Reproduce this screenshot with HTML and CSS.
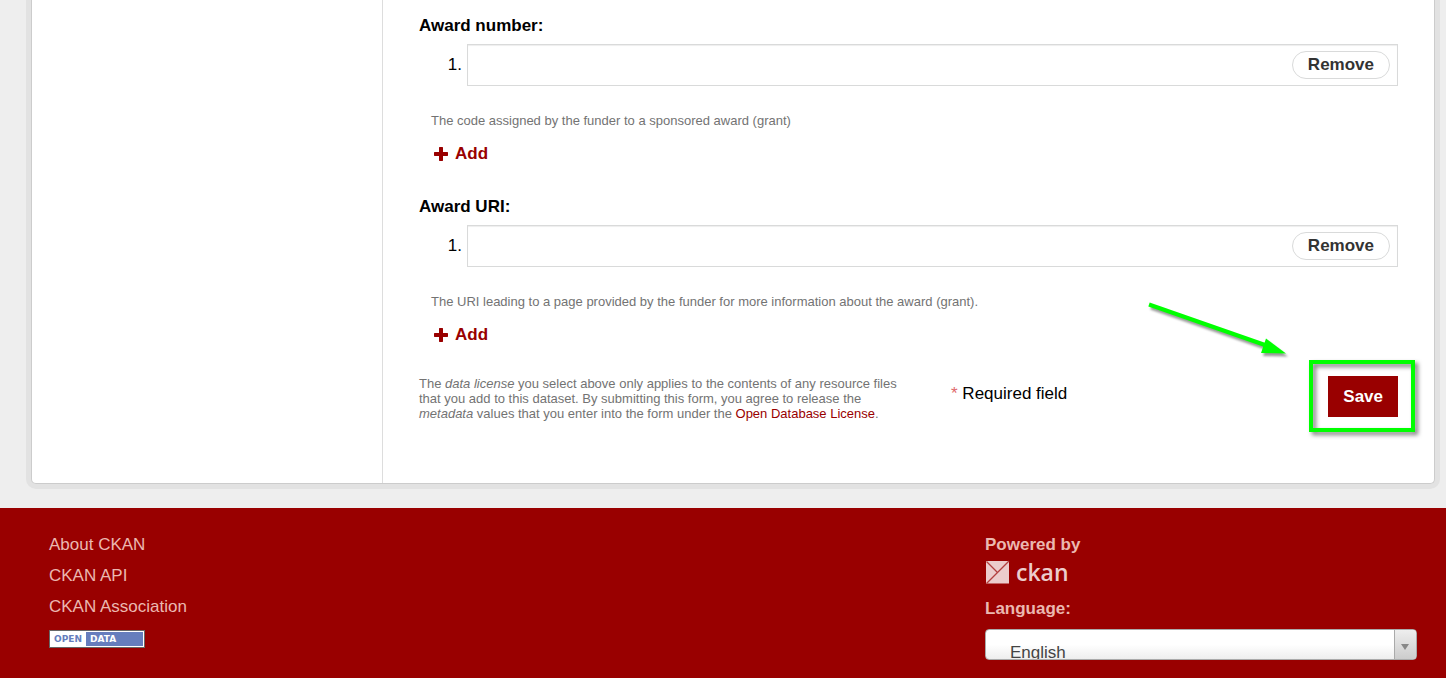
FILE: index.html
```html
<!DOCTYPE html>
<html lang="en">
<head>
<meta charset="utf-8">
<meta name="viewport" content="width=device-width, initial-scale=1">
<title>Edit dataset - CKAN</title>
<link rel="stylesheet" href="styles.css">
</head>
<body>
<main class="wrapper">
  <aside class="sidebar"></aside>
  <form class="content">
    <section class="field">
      <label class="field-label" for="award-number">Award number:</label>
      <ol class="values">
        <li class="value">
          <div class="value-box">
            <input class="value-input" id="award-number" type="text">
            <button class="remove" type="button">Remove</button>
          </div>
        </li>
      </ol>
      <p class="help">The code assigned by the funder to a sponsored award (grant)</p>
      <a class="add" href="#add-number"><svg class="plus" viewBox="0 0 14 14" aria-hidden="true"><path d="M5.500 0h3l.5.5V5h4.500l.5.5v3l-.5.5H9v4.500l-.5.5h-3l-.5-.5V9H.5L0 8.500v-3L.5 5H5V.5z"/></svg>Add</a>
    </section>
    <section class="field">
      <label class="field-label" for="award-uri">Award URI:</label>
      <ol class="values">
        <li class="value">
          <div class="value-box">
            <input class="value-input" id="award-uri" type="text">
            <button class="remove" type="button">Remove</button>
          </div>
        </li>
      </ol>
      <p class="help">The URI leading to a page provided by the funder for more information about the award (grant).</p>
      <a class="add" href="#add-uri"><svg class="plus" viewBox="0 0 14 14" aria-hidden="true"><path d="M5.500 0h3l.5.5V5h4.500l.5.5v3l-.5.5H9v4.500l-.5.5h-3l-.5-.5V9H.5L0 8.500v-3L.5 5H5V.5z"/></svg>Add</a>
    </section>
    <div class="actions">
      <p class="license">The <em>data license</em> you select above only applies to the contents of any resource files that you add to this dataset. By submitting this form, you agree to release the <em>metadata</em> values that you enter into the form under the <a class="license-link" href="#odbl">Open Database License</a>.</p>
      <p class="required"><span class="star">*</span> Required field</p>
      <div class="save-area">
        <button class="save" type="submit">Save</button>
        <span class="highlight"></span>
        <svg class="arrow" viewBox="0 0 144 60" aria-hidden="true">
          <path d="M4 4.500 120 45" stroke="#0f0" stroke-width="4" fill="none"/>
          <path d="M121 38.500 141 53.500 116 53z" fill="#0f0"/>
        </svg>
      </div>
    </div>
  </form>
</main>
<footer class="footer">
  <nav class="footer-links">
    <a class="footer-link" href="#about">About CKAN</a>
    <a class="footer-link" href="#api">CKAN API</a>
    <a class="footer-link" href="#association">CKAN Association</a>
    <a class="badge" href="#open-data"><span class="badge-open">OPEN</span><span class="badge-data">DATA</span></a>
  </nav>
  <div class="footer-side">
    <strong class="footer-heading">Powered by</strong>
    <a class="logo" href="#ckan">
      <svg class="logo-mark" viewBox="0 0 24 24" aria-hidden="true">
        <path d="M0.500 1h23v22.500h-23z" fill="#eccccc"/>
        <path d="M1 1.500 11.500 12M23.500 1 1 23.500" stroke="#b23f3f" stroke-width="1.300" fill="none"/>
      </svg>
      <span class="logo-text">ckan</span>
    </a>
    <label class="footer-heading language" for="language">Language:</label>
    <div class="select-box">
      <select class="select" id="language"><option>English</option></select>
      <span class="select-arrow"></span>
    </div>
  </div>
</footer>
</body>
</html>
```
FILE: styles.css
```css
* {
  box-sizing: border-box;
}

body {
  margin: 0;
  min-height: 100vh;
  display: flex;
  flex-direction: column;
  background: #eee;
  color: #000;
  font: 17px/20px "Liberation Sans", Arial, sans-serif;
}

a {
  text-decoration: none;
}

.wrapper {
  display: flex;
  margin: 0 11px 24px 31px;
  background: #fff;
  border: 1px solid #ccc;
  border-top: 0;
  border-radius: 0 0 5px 5px;
  box-shadow: 0 0 0 5px #e2e2e2;
}

.sidebar {
  flex: 0 0 350px;
}

.content {
  flex: 1;
  min-width: 0;
  padding: 16px 36px 62px;
  border-left: 1px solid #ddd;
}

.field {
  margin-bottom: 31px;
}

.field + .field {
  margin-top: 33px;
}

.field-label {
  display: block;
  font-weight: bold;
}

.values {
  margin: 8px 0 25px;
  padding: 0;
  list-style: none;
  counter-reset: value;
}

.value {
  display: flex;
  align-items: center;
  counter-increment: value;
}

.value::before {
  content: counter(value) ".";
  flex: 0 0 43px;
  padding-right: 5px;
  text-align: right;
}

.value-box {
  flex: 1;
  display: flex;
  align-items: center;
  height: 42px;
  padding-right: 7px;
  border: 1px solid #d9dada;
  box-shadow: inset 0 1px 1px #eee;
}

.value-input {
  flex: 1;
  min-width: 0;
  height: 36px;
  padding: 0 8px;
  border: 0;
  outline: 0;
  background: transparent;
  font: inherit;
}

.remove {
  height: 28px;
  padding: 0 15px;
  border: 1px solid #d9dada;
  border-radius: 14px;
  background: #fff;
  color: #333;
  font: bold 17px/20px "Liberation Sans", Arial, sans-serif;
}

.help {
  margin: 0 0 13px 12px;
  color: #737373;
  font-size: 13px;
}

.add {
  display: flex;
  align-items: center;
  gap: 7px;
  width: max-content;
  margin-left: 15px;
  color: #900;
  font-weight: bold;
}

.plus {
  width: 14px;
  height: 14px;
  fill: #900;
}

.actions {
  display: grid;
  grid-template-columns: 490px 1fr auto;
  column-gap: 42px;
  align-items: start;
}

.license {
  margin: 0;
  color: #737373;
  font-size: 13px;
  line-height: 15px;
}

.license-link {
  color: #900;
}

.required {
  margin: 8px 0 0;
}

.star {
  color: #e0696c;
}

.save-area {
  position: relative;
}

.save {
  display: block;
  padding: 11px 15px 10px;
  border: 0;
  background: #900;
  color: #fff;
  font: bold 17px/20px "Liberation Sans", Arial, sans-serif;
}

.highlight {
  position: absolute;
  inset: -16px -17px -15px -19px;
  border: 4px solid #0f0;
  filter: drop-shadow(3px 3px 2px rgba(0, 0, 0, 0.5));
  pointer-events: none;
}

.arrow {
  position: absolute;
  top: -76px;
  right: 109px;
  width: 144px;
  height: 60px;
  overflow: visible;
  filter: drop-shadow(2px 3px 1px rgba(0, 0, 0, 0.4));
  pointer-events: none;
}

.footer {
  flex: 1;
  display: grid;
  grid-template-columns: 13fr 6fr;
  padding: 27px 29px 18px 49px;
  background: #900;
  color: #ebb8b0;
}

.footer-links {
  display: flex;
  flex-direction: column;
  align-items: flex-start;
  gap: 11px;
}

.footer-link {
  color: #ebb8b0;
}

.badge {
  display: flex;
  width: 96px;
  height: 18px;
  margin-top: 2px;
  padding: 1px;
  border: 1px solid #666;
  background: #fff;
  font: bold 9px/14px "DejaVu Sans", sans-serif;
}

.badge-open {
  width: 35px;
  padding-left: 3px;
  color: #667dbd;
}

.badge-data {
  flex: 1;
  padding-left: 4px;
  background: #667dbd;
  color: #fff;
}

.footer-heading {
  display: block;
  font-weight: bold;
}

.logo {
  display: flex;
  align-items: center;
  gap: 6px;
  width: max-content;
  height: 24px;
  margin-top: 5px;
  color: #eccccc;
}

.logo-mark {
  width: 25px;
  height: 24px;
}

.logo-text {
  font: 600 23px/24px "Open Sans", "Noto Sans", sans-serif;
}

.language {
  margin-top: 15px;
}

.select-box {
  position: relative;
  display: flex;
  height: 31px;
  margin-top: 10px;
  overflow: hidden;
  border: 1px solid #aaa;
  border-radius: 4px;
  background: linear-gradient(#fff 50%, #eee);
}

.select {
  flex: 1;
  height: 46px;
  padding: 0 24px;
  appearance: none;
  border: 0;
  background: transparent;
  color: #444;
  font: inherit;
}

.select-arrow {
  position: absolute;
  inset: 0 0 0 auto;
  width: 22px;
  border-left: 1px solid #aaa;
  background: linear-gradient(#eee, #ccc);
  pointer-events: none;
}

.select-arrow::after {
  content: "";
  position: absolute;
  top: 14px;
  left: 6px;
  border: 4px solid transparent;
  border-top: 6px solid #888;
  border-bottom: 0;
}
```
